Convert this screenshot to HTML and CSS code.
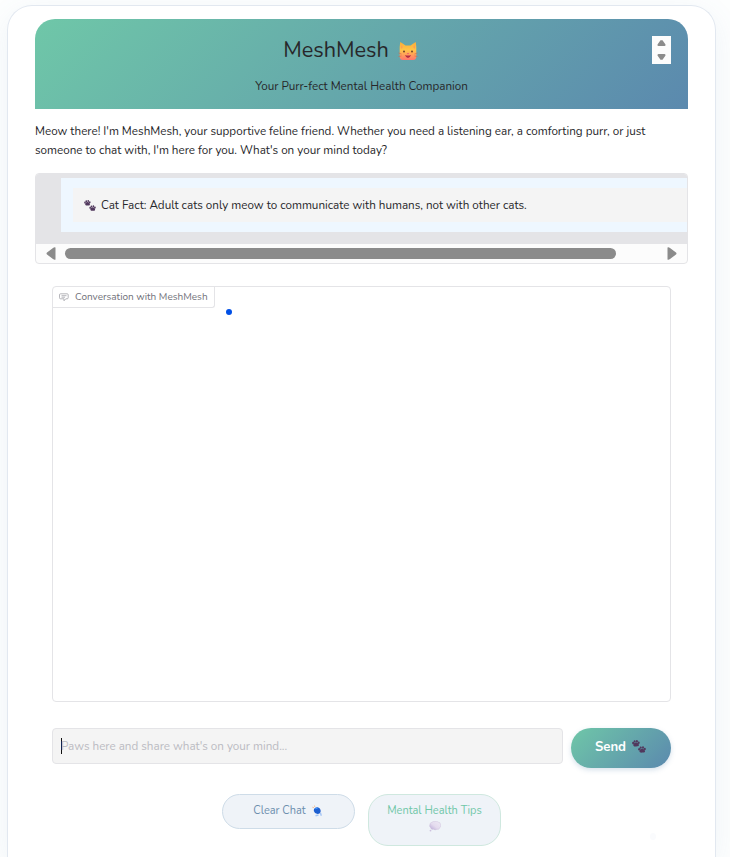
FILE: index.html
```html
<!DOCTYPE html>
<html lang="en">
<head>
<meta charset="utf-8">
<title>MeshMesh</title>
<link rel="stylesheet" href="styles.css">
</head>
<body>
<svg class="defs" aria-hidden="true">
  <defs>
    <linearGradient id="fur" x1="0" y1="0" x2="0" y2="1"><stop offset="0" stop-color="#f9ad38"/><stop offset=".45" stop-color="#ffc548"/><stop offset="1" stop-color="#ff766d"/></linearGradient>
    <linearGradient id="bubble" x1="1" y1="0" x2="0" y2="1"><stop offset="0" stop-color="#eeeaf5"/><stop offset=".55" stop-color="#e4dbee"/><stop offset="1" stop-color="#b6a5d4"/></linearGradient>
    <symbol id="paws" viewBox="0 0 14 13">
      <g id="paw" fill="#51385d"><path d="M1.600 5.900C.8 5 1.800 2.900 3.600 2.500c1.900-.2 3.700 1.500 3.300 3-.3 1-1.700.8-2.600.9-.9.200-2 .2-2.700-.5z"/><ellipse cx="1.100" cy="3.100" rx="1" ry="1.300"/><ellipse cx="2.600" cy="1.400" rx="1" ry="1.200"/><ellipse cx="4.900" cy="1.300" rx="1" ry="1.200"/><ellipse cx="6.700" cy="2.800" rx="1" ry="1.200"/></g>
      <use href="#paw" x="6.100" y="6.200"/>
    </symbol>
  </defs>
</svg>
<main class="card">
  <header class="hero">
    <h1><span class="brand">MeshMesh</span>
      <svg class="cat" viewBox="0 0 20 20"><path d="M2.200 1Q4.500 2 7.500 4.500h5q3-2.500 5.300-3.500Q18.500 6 18.300 10v6q-.3 2.900-3 2.900H4.700q-2.700 0-3-2.900v-6Q1.500 6 2.200 1z" fill="url(#fur)"/><path d="M3 4l2 2-2 2zM17 4l-2 2 2 2z" fill="#ff9e55"/><circle cx="6" cy="10.500" r="1" fill="#70432e"/><circle cx="14" cy="10.500" r="1" fill="#70432e"/><path d="M7 14q3 1 6 0-1 3-3 3t-3-3z" fill="#b52b43"/><path d="M8.800 12h2.400L10 13.500z" fill="#e9586b"/><path d="M.5 12l3 1M.5 15.500l3-.5M19.500 12l-3 1M19.500 15.500l-3-.5" stroke="#ce684b" stroke-width=".6"/></svg>
    </h1>
    <p class="tagline">Your Purr-fect Mental Health Companion</p>
    <svg class="stepper" viewBox="0 0 19 28"><path fill="#fcfcfc" d="M0 0h19v28H0z"/><path d="M8.500 4.300h2l3 4.200q.3 1.500-1 1.500h-6q-1.300 0-1-1.500zM6.500 18h6q1.300 0 1 1.500l-3 4.200h-2l-3-4.200q-.3-1.500 1-1.500z" fill="#8b8b8b"/></svg>
  </header>
  <p class="intro"><span>Meow there! I'm MeshMesh, your supportive feline friend. Whether you need a listening ear, a comforting purr, or just</span><br><span>someone to chat with, I'm here for you. What's on your mind today?</span></p>
  <section class="fact">
    <div class="fact-pane"><div class="fact-text"><svg class="paws-sm"><use href="#paws"/></svg><span>Cat Fact: Adult cats only meow to communicate with humans, not with other cats.</span></div></div>
    <div class="scroll">
      <svg viewBox="0 0 10 13"><path d="M9.500 .5V12.500Q8.500 13.200 7 12L1 7.500Q0 6.500 1 5.500L7 1Q8.500-.2 9.500 .5z" fill="#8b8b8b"/></svg>
      <div class="track"><div class="thumb"></div></div>
      <svg viewBox="0 0 10 13"><path d="M.5 .5V12.500Q1.500 13.200 3 12L9 7.500Q10 6.500 9 5.500L3 1Q1.500-.2 .5 .5z" fill="#8b8b8b"/></svg>
    </div>
  </section>
  <section class="chat">
    <div class="chat-label"><svg viewBox="0 0 10 9" fill="none" stroke="#a3a3aa" stroke-width=".8"><path d="M1.500.8h6.700q1 0 1 1v3q0 1-1 1H6.800L5 7.800v-2H1.500q-1 0-1-1v-3q0-1 1-1zM2.500 2.700h5M2.500 4.200h3.500"/></svg><span>Conversation with MeshMesh</span></div>
    <i class="dot"></i>
  </section>
  <div class="compose">
    <div class="input"><i class="caret"></i><span>Paws here and share what's on your mind...</span></div>
    <button class="send"><span>Send</span><svg class="paws-lg"><use href="#paws"/></svg></button>
  </div>
  <div class="actions">
    <button class="pill clear"><span>Clear Chat</span><svg viewBox="0 0 10 12"><path d="M.3 2.200l1.700.5M2.500 .5l.3 1.500" stroke="#f2c39d"/><path d="M2 4Q3 2 5.500 2.200 8.500 3 8.700 6 8.500 9 5.500 9 2.500 8.500 1.800 6z" fill="#1d5fd0"/><path d="M3.200 3.800l2.600-.8" stroke="#3e96ff"/><path d="M3.500 10.800L6.500 10M8.500 8l.8 2.800" stroke="#a5c6f5" stroke-width="1.400"/></svg></button>
    <button class="pill tips"><span>Mental Health Tips</span><svg viewBox="0 0 12 11"><path d="M3 1.300Q4-.2 6 .6q2-1 3.500.7 2 0 2 2 1 2-.7 3.400Q10 9 8 8.300 6 9.500 4.500 8.300 2 8.800 1.600 6.700 0 5.500.9 3.500 1 1.500 3 1.300z" fill="url(#bubble)" stroke="#c9bdda" stroke-width=".4"/><circle cx="1.500" cy="9.600" r=".9" fill="#cdc1df"/></svg></button>
  </div>
  <i class="speck"></i>
</main>
</body>
</html>
```
FILE: styles.css
```css
* { box-sizing: border-box; }
html { overflow: hidden; }
body { margin: 0; height: 857px; padding: 5px 14px 0 7px; overflow: hidden; background: #fdfefe; color: #27272a; font: 11.67px/19px Nunito, Lato, sans-serif; }
.defs { position: absolute; width: 0; height: 0; }
h1, p { margin: 0; }
svg { display: block; flex: none; }
span { white-space: nowrap; }
button { font-family: inherit; cursor: pointer; }
.card { height: 852px; padding: 13px 27px 0; background: #fff; border: 1px solid #e2e8f0; border-bottom: 0; border-radius: 25px 25px 0 0; box-shadow: 0 8px 30px rgba(91, 137, 174, .09); }
.hero { position: relative; height: 90px; padding-top: 17px; border-radius: 20px 20px 0 0; background: linear-gradient(135deg, #6fc7a8, #5b89ae); text-align: center; }
h1 { display: flex; justify-content: center; align-items: center; gap: 9px; height: 28px; padding-right: 22px; font-size: 21.7px; line-height: 28px; font-weight: 400; }
.cat { width: 20px; height: 20px; margin-top: 2px; }
.tagline { margin-top: 13px; }
.stepper { position: absolute; top: 17px; right: 17px; width: 19px; height: 28px; }
.intro { height: 64px; padding-top: 13px; }
.fact { height: 91px; border: 1px solid #e4e4e7; border-radius: 4px; background: #fcfcfc; overflow: hidden; }
.fact-pane { height: 70px; padding: 4px 0 12px 25px; background: #e4e4e7; }
.fact-text { height: 54px; display: flex; align-items: center; gap: 5px; padding-left: 11px; border: solid #eef7ff; border-width: 10px 0 10px 12px; background: #f4f4f4; }
.paws-sm { width: 12px; height: 11px; }
.scroll { display: flex; height: 19px; padding: 0 10px 0 9.5px; align-items: center; justify-content: space-between; }
.scroll svg { width: 10px; height: 13px; }
.track { flex: 1; padding: 0 51px 0 9.5px; }
.thumb { height: 11px; border-radius: 6px; background: #8b8b8b; }
.chat { display: flex; height: 416px; margin: 22px 17px 0; border: 1px solid #e4e4e7; border-radius: 4px; }
.chat-label { display: flex; align-items: center; gap: 6px; width: 162px; height: 21px; padding-left: 6px; border: solid #e4e4e7; border-width: 0 1px 1px 0; border-radius: 3px 0 3px 0; color: #71717a; font-size: 10px; line-height: 18px; }
.chat-label svg { width: 10px; height: 9px; margin-top: 1px; }
.dot { width: 6px; height: 6px; margin: 22px 0 0 11px; border-radius: 50%; background: #0050e6; }
.compose { display: flex; gap: 8px; margin: 26px 17px 0; }
.input { display: flex; align-items: center; flex: 1; height: 36px; padding-left: 8px; border: 1px solid #e4e4e7; border-radius: 4px; background: #f4f4f4; color: #bbbbc2; }
.caret { width: 1px; height: 16px; margin-right: -1px; background: #111; }
.send { display: flex; align-items: center; justify-content: center; gap: 6px; width: 100px; height: 40px; padding: 0 1px 3px 0; border: 0; border-radius: 20px; background: linear-gradient(135deg, #6fc7a8, #5b89ae); color: #fff; font-size: 13.2px; font-weight: 700; box-shadow: 0 2px 5px rgba(91, 137, 174, .25); }
.paws-lg { width: 14px; height: 13px; }
.actions { display: flex; justify-content: center; align-items: flex-start; gap: 13px; margin-top: 26px; }
.pill { display: flex; justify-content: center; width: 133px; border: 1px solid #cedce8; border-radius: 20px; background: #eff3f8; color: #6c8eae; font-size: 11px; line-height: 18px; }
.clear { height: 35px; padding: 7px 2px 0 0; gap: 6px; }
.clear svg { width: 10px; height: 12px; margin-top: 3px; }
.tips { height: 52px; padding: 7px 0 0; flex-direction: column; align-items: center; justify-content: flex-start; border-color: #cfe8df; color: #6fc7a8; }
.tips svg { width: 12px; height: 11px; margin-top: 1px; }
.speck { display: block; width: 6px; height: 7px; margin: -13px 0 0 615px; border-radius: 50%; background: #fafbfd; }
```
